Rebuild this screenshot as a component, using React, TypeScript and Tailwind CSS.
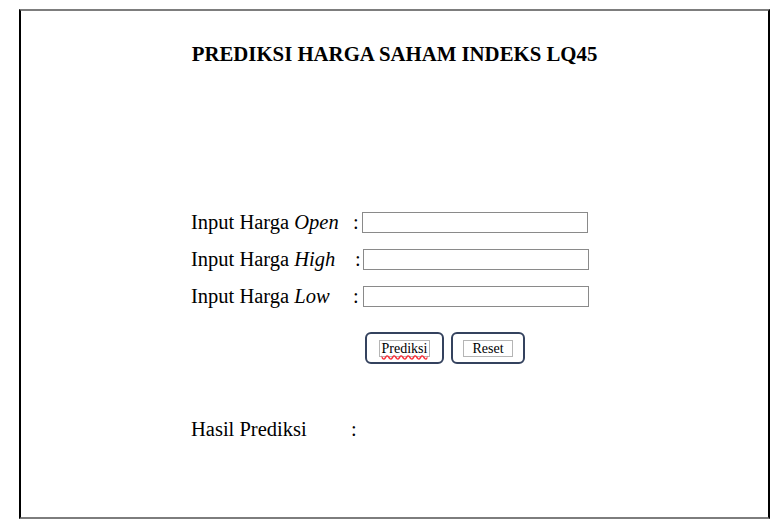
const serif = { fontFamily: '"Liberation Serif", "Times New Roman", serif' };

function Baris({ label, miring, colonGeser }: { label: string; miring: string; colonGeser: string }) {
    return (
        <div className="flex items-start h-[37px]">
            <span className="w-[162px] text-[20.5px] leading-[23px] text-black">
                {label} <i>{miring}</i>
            </span>
            <span className={`text-[20.5px] leading-[23px] ${colonGeser}`}>:</span>
            <input
                type="text"
                className="ml-[1px] mt-[1px] h-[21px] w-[226px] border border-[#8a8a8a] bg-white outline-none"
            />
        </div>
    );
}

function App() {
    return (
        <div className="bg-white min-h-[532px] w-[778px] pt-[9px] pl-[19px]" style={serif}>
            <div className="w-[751px] h-[510px] border-t-2 border-b-2 border-t-[#7d7d7d] border-b-[#7d7d7d] border-l-2 border-r-2 border-l-black border-r-black">
                <h1 className="pt-[31px] text-center text-[20.8px] leading-[24px] font-bold text-black">
                    PREDIKSI HARGA SAHAM INDEKS LQ45
                </h1>

                <div className="pl-[170px] pt-[145px]">
                    <Baris label="Input Harga" miring="Open" colonGeser="w-[8px]" />
                    <Baris label="Input Harga" miring="High" colonGeser="w-[9px] pl-[2px]" />
                    <Baris label="Input Harga" miring="Low" colonGeser="w-[9px]" />

                    <div className="flex gap-[7px] pl-[174px] pt-[10px]">
                        <button className="w-[79px] h-[32px] rounded-[6px] border-2 border-[#34425e] bg-white flex items-center justify-center">
                            <span className="border border-[#b5b5b5] px-[2px] text-[14px] leading-[15px] text-black underline decoration-wavy decoration-red-500 underline-offset-2">
                                Prediksi
                            </span>
                        </button>
                        <button className="w-[74px] h-[32px] rounded-[6px] border-2 border-[#34425e] bg-white flex items-center justify-center">
                            <span className="border border-[#b5b5b5] px-[8px] text-[14px] leading-[15px] text-black">
                                Reset
                            </span>
                        </button>
                    </div>

                    <div className="flex pt-[54px]">
                        <span className="w-[160px] text-[20.5px] leading-[23px]">Hasil Prediksi</span>
                        <span className="text-[20.5px] leading-[23px]">:</span>
                    </div>
                </div>
            </div>
        </div>
    );
}

export default App;
